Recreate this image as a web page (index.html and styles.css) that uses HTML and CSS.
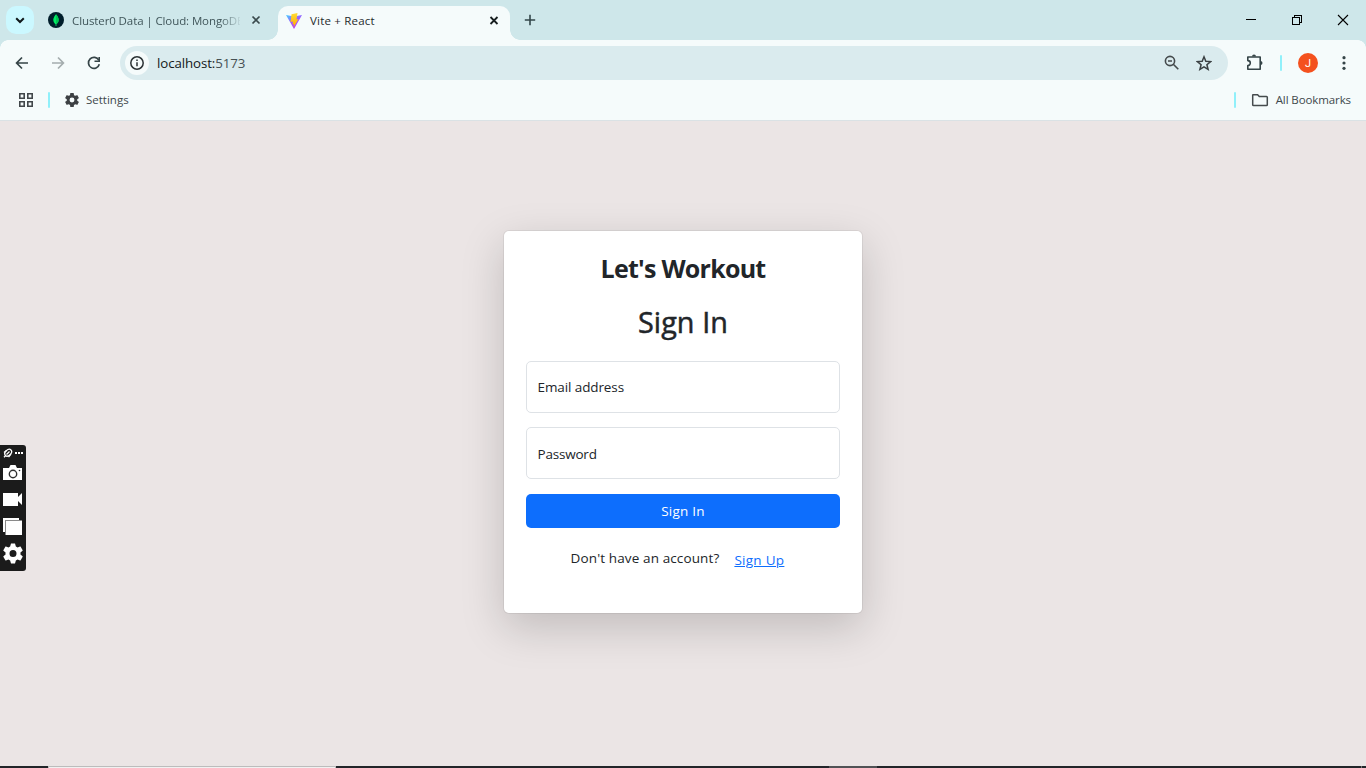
FILE: index.html
```html
<!DOCTYPE html>
<html lang="en">
<head>
<meta charset="utf-8">
<title>Vite + React</title>
<link rel="stylesheet" href="styles.css">
</head>
<body>
<div class="browser">
  <div class="tabstrip">
    <div class="tab-search"><svg width="28" height="28" viewBox="0 0 28 28"><path d="M10.2 12.2L14 16l3.8-3.8" fill="none" stroke="#10191b" stroke-width="2"/></svg></div>
    <div class="tab tab-idle">
      <svg width="16" height="16" viewBox="0 0 16 16"><circle cx="8" cy="8" r="8" fill="#001e2b"/><path d="M8 2.200C5.500 5 4.900 7.500 5.500 9.300c.4 1.500 1.300 2.300 2.100 3V14h.8v-1.700c.8-.7 1.700-1.500 2.100-3C11.100 7.500 10.500 5 8 2.200z" fill="#00ed64"/><path d="M8 2.200V12.300c.8-.7 2-1.500 2.500-3C11.100 7.500 10.500 5 8 2.200z" fill="#00c653"/></svg>
      <span class="tab-title fade">Cluster0 Data | Cloud: MongoDB</span>
      <svg width="16" height="16" viewBox="0 0 16 16"><path d="M4.500 4.500l7 7M11.500 4.500l-7 7" stroke="#3a4a4d" stroke-width="1.700"/></svg>
    </div>
    <div class="tab tab-active">
      <svg width="16" height="16" viewBox="0 0 32 32"><defs><linearGradient id="va" x1="0" y1="0" x2=".6" y2="1"><stop offset="0" stop-color="#41d1ff"/><stop offset=".5" stop-color="#9a60ff"/><stop offset="1" stop-color="#bd34fe"/></linearGradient><linearGradient id="vb" x1="0" y1="0" x2="0" y2="1"><stop offset="0" stop-color="#ffdd35"/><stop offset="1" stop-color="#ffa800"/></linearGradient></defs><path d="M0 4L16 7 32 4 16 32z" fill="url(#va)"/><path d="M23 0L11 2.500 9 18l5-1-1 6 3-1-1 7 10-17-4 1z" fill="url(#vb)"/></svg>
      <span class="tab-title t-vite">Vite + React</span>
      <svg width="16" height="16" viewBox="0 0 16 16"><path d="M4.500 4l7 7M11.500 4l-7 7" stroke="#171f20" stroke-width="1.800"/></svg>
    </div>
    <svg class="new-tab" width="16" height="16" viewBox="0 0 16 16"><path d="M8 2.800v10.400M2.800 8h10.400" stroke="#33474a" stroke-width="1.600"/></svg>
    <div class="window-controls">
      <svg width="46" height="40" viewBox="0 0 46 40" shape-rendering="crispEdges"><path d="M18 19.500h10" stroke="#000"/></svg>
      <svg width="46" height="40" viewBox="0 0 46 40" shape-rendering="crispEdges"><path d="M18.500 17.500h7v7h-7zM20.500 17V15.500h7v7H26" fill="none" stroke="#000"/></svg>
      <svg width="46" height="40" viewBox="0 0 46 40"><path d="M18 15l10 10M28 15L18 25" stroke="#000" stroke-width="1.100"/></svg>
    </div>
  </div>
  <div class="toolbar">
    <svg width="20" height="20" viewBox="0 0 20 20"><path d="M16 10H5M10 4.500L4.600 10l5.400 5.500" fill="none" stroke="#354447" stroke-width="1.700"/></svg>
    <svg width="20" height="20" viewBox="0 0 20 20"><path d="M4 10h11M10 4.500l5.400 5.500-5.400 5.500" fill="none" stroke="#a4adae" stroke-width="1.700"/></svg>
    <svg width="20" height="20" viewBox="0 0 20 20"><path d="M14.800 7.200A5.500 5.500 0 1 0 15.300 11.300" fill="none" stroke="#354447" stroke-width="1.700"/><path d="M15.200 4v4.300h-4.700" fill="none" stroke="#354447" stroke-width="1.600"/></svg>
    <div class="omnibox">
      <div class="site-info"><svg width="16" height="16" viewBox="0 0 16 16"><circle cx="8" cy="8" r="6.200" fill="none" stroke="#2a3133" stroke-width="1.500"/><path d="M8 7.200v4M8 4.500v1.500" stroke="#2a3133" stroke-width="1.500"/></svg></div>
      <span class="url">localhost:<span class="port">5173</span></span>
      <svg width="16" height="16" viewBox="0 0 16 16"><circle cx="6" cy="6" r="4.600" fill="none" stroke="#454b4d" stroke-width="1.600"/><path d="M9.300 9.300l5 5M4 6h4" stroke="#454b4d" stroke-width="1.600"/></svg>
      <svg width="16" height="16" viewBox="0 0 16 16"><path d="M8 1.800l1.800 4.400 4.800.4-3.700 3.100 1.200 4.700L8 11.900l-4.100 2.500 1.200-4.700L1.400 6.600l4.800-.4z" fill="none" stroke="#3b4143" stroke-width="1.500"/></svg>
    </div>
    <svg width="20" height="20" viewBox="0 0 20 20"><path d="M3.800 4H16.200V16.200H3.800V12.600a2.400 2.400 0 0 0 0-5z" fill="none" stroke="#354447" stroke-width="1.600" stroke-linejoin="round"/><path d="M8 3.500a2 2 0 0 1 4 0zM16.500 8.100a2 2 0 0 1 0 4z" fill="#354447"/></svg>
    <i class="divider"></i>
    <div class="avatar">J</div>
    <svg class="more" width="16" height="16" viewBox="0 0 16 16"><g fill="#354447"><circle cx="8" cy="2.700" r="1.600"/><circle cx="8" cy="8" r="1.600"/><circle cx="8" cy="13.300" r="1.600"/></g></svg>
  </div>
  <div class="bookmarks">
    <svg width="16" height="16" viewBox="0 0 16 16"><path d="M1.800 1.800h4.400v4.400H1.800zM9.800 1.800h4.400v4.400H9.800zM1.800 9.800h4.400v4.400H1.800zM9.800 9.800h4.400v4.400H9.800z" fill="none" stroke="#41474a" stroke-width="1.600"/></svg>
    <i class="divider"></i>
    <svg width="14" height="14" viewBox="2 2 20 20"><path d="M19.430 12.980c.04-.32.07-.64.07-.98s-.03-.66-.07-.98l2.110-1.650c.19-.15.24-.42.12-.64l-2-3.460c-.12-.22-.39-.3-.61-.22l-2.490 1c-.52-.4-1.080-.73-1.690-.98l-.38-2.650A.488.488 0 0 0 14 2h-4c-.25 0-.46.18-.49.42l-.38 2.650c-.61.25-1.170.59-1.690.98l-2.490-1c-.23-.09-.49 0-.61.22l-2 3.460c-.13.22-.07.49.12.64l2.110 1.650c-.04.32-.07.65-.07.98s.03.66.07.98l-2.110 1.650c-.19.15-.24.42-.12.64l2 3.460c.12.22.39.3.61.22l2.490-1c.52.4 1.080.73 1.690.98l.38 2.650c.03.24.24.42.49.42h4c.25 0 .46-.18.49-.42l.38-2.650c.61-.25 1.170-.59 1.690-.98l2.490 1c.23.09.49 0 .61-.22l2-3.460c.12-.22.07-.49-.12-.64zM12 15.500A3.500 3.500 0 1 1 12 8.500a3.500 3.500 0 0 1 0 7z" fill="#3c4043"/></svg>
    <span class="t-settings">Settings</span>
    <i class="divider push"></i>
    <svg width="18" height="16" viewBox="0 0 18 16"><path d="M2 2.700h4.600l1.700 1.800h7.200q.8 0 .8.800v7.400q0 .8-.8.800H2.500q-.8 0-.8-.8V3z" fill="none" stroke="#454b4d" stroke-width="1.500"/></svg>
    <span class="t-all">All Bookmarks</span>
  </div>
</div>

<main class="page">
  <section class="card">
    <h1 class="brand">Let's Workout</h1>
    <h2 class="heading">Sign In</h2>
    <div class="field"><span>Email address</span></div>
    <div class="field field-password"><span>Password</span></div>
    <div class="submit">Sign In</div>
    <div class="signup"><span>Don't have an account?</span><a class="signup-link">Sign Up</a></div>
  </section>
</main>

<aside class="recorder">
  <svg width="26" height="126" viewBox="0 0 26 126">
    <ellipse cx="8.200" cy="7.700" rx="3.900" ry="2.700" transform="rotate(-45 8.200 7.700)" fill="none" stroke="#fff" stroke-width="1.300"/>
    <path d="M6.500 9.500L9.500 6.500M4 12.200l1.500-1.500M6.500 5.500L4 7.500M11 9L8.500 12" fill="none" stroke="#fff" stroke-width="1.300"/>
    <g fill="#fff"><rect x="15" y="7" width="2" height="2"/><rect x="18" y="7" width="2" height="2"/><rect x="21" y="7" width="2" height="2"/>
    <path d="M3 23h6l1.500-3h5l1.500 3h5v12H3z"/><path d="M3 48h15v4l4-4v12l-4-4v5H3z"/></g>
    <circle cx="13" cy="29" r="3.700" fill="#fff" stroke="#303030" stroke-width="1.400"/><circle cx="19.500" cy="25.500" r=".8" fill="#222"/>
    <path d="M3 73h16v14H3z" fill="#fff"/><path d="M5 75h17v15H5z" fill="#8a8a8a"/><path d="M6 76h16v14H6z" fill="#fff"/>
    <path transform="translate(1 96.500)" d="M19.430 12.980c.04-.32.07-.64.07-.98s-.03-.66-.07-.98l2.110-1.650c.19-.15.24-.42.12-.64l-2-3.460c-.12-.22-.39-.3-.61-.22l-2.490 1c-.52-.4-1.080-.73-1.690-.98L14 2h-4l-.87 3.070c-.61.25-1.170.59-1.690.98l-2.490-1c-.23-.09-.49 0-.61.22l-2 3.460c-.13.22-.07.49.12.64l2.110 1.650a7 7 0 0 0 0 1.960l-2.110 1.650c-.19.15-.24.42-.12.64l2 3.460c.12.22.39.3.61.22l2.490-1c.52.4 1.080.73 1.690.98L10 22h4l.87-3.070c.61-.25 1.170-.59 1.690-.98l2.490 1c.23.09.49 0 .61-.22l2-3.460c.12-.22.07-.49-.12-.64zM12 15.500A3.500 3.500 0 1 1 12 8.500a3.500 3.500 0 0 1 0 7z" fill="#fff"/>
  </svg>
</aside>
<footer class="taskbar"><i class="task-search"></i><i class="task-active"></i><i class="task-edge"></i></footer>
</body>
</html>
```

FILE: styles.css
```css
* { box-sizing: border-box; }
body {
  margin: 0; width: 1366px; height: 768px; overflow: hidden;
  display: flex; flex-direction: column;
  background: #ebe5e5; color: #212529;
  font-family: "Open Sans", "Noto Sans", sans-serif;
}
svg { display: block; flex: none; }
span, a { white-space: nowrap; }
.browser { height: 121px; flex: none; font-size: 11.500px; background: #f5fbfb; border-bottom: 1px solid #dae2e5; }
.tabstrip { height: 40px; display: flex; align-items: center; background: #cee7ea; }
.tab-search { width: 28px; height: 28px; margin-left: 6px; border-radius: 10px; background: #cbf8ff; }
.tab { display: flex; align-items: center; }
.tab-title { flex: 1; margin-left: 8px; line-height: 18px; }
.tab-idle { width: 216px; margin-left: 14px; color: #40565a; }
.tab-idle .tab-title { flex: none; width: 168px; margin: 1px 8px 0 8px; letter-spacing: -.1px; }
.fade { -webkit-mask-image: linear-gradient(90deg, #000 148px, transparent 170px); mask-image: linear-gradient(90deg, #000 148px, transparent 170px); }
.t-vite { letter-spacing: .2px; }
.tab-active {
  width: 232px; height: 34px; margin-left: 14px; padding: 0 8px 5px 8px;
  align-self: flex-end; position: relative; color: #1f2b2d;
  background: #f5fbfb; border-radius: 10px 10px 0 0;
}
.tab-active::before, .tab-active::after { content: ""; position: absolute; bottom: 0; width: 10px; height: 10px; }
.tab-active::before { left: -10px; background: radial-gradient(circle at 0 0, #cee7ea 9.500px, #f5fbfb 10px); }
.tab-active::after { right: -10px; background: radial-gradient(circle at 100% 0, #cee7ea 9.500px, #f5fbfb 10px); }
.new-tab { margin-left: 12px; }
.window-controls { display: flex; margin-left: auto; }
.toolbar { height: 46px; display: flex; align-items: center; padding-left: 12px; gap: 16px; position: relative; }
.toolbar::before, .toolbar::after { content: ""; position: absolute; top: 0; width: 8px; height: 8px; }
.toolbar::before { left: 0; background: radial-gradient(circle at 100% 100%, transparent 7.500px, #cee7ea 8px); }
.toolbar::after { right: 0; background: radial-gradient(circle at 0 100%, transparent 7.500px, #cee7ea 8px); }
.omnibox { width: 1108px; height: 34px; display: flex; align-items: center; padding: 0 16px 0 5px; border-radius: 17px; background: #daebee; }
.site-info { width: 24px; height: 24px; display: grid; place-items: center; border-radius: 50%; background: #f5fbfb; }
.url { flex: 1; margin-left: 8px; font-size: 13.300px; letter-spacing: -.1px; color: #14191a; }
.port { color: #465053; }
.omnibox svg + svg { margin-left: 16px; }
.divider { width: 2px; height: 16px; flex: none; border-radius: 1px; background: #90f0fa; }
.avatar { width: 20px; height: 20px; border-radius: 50%; background: #f4511e; color: #fff; font: 11px/21px Roboto, sans-serif; text-align: center; }
.more { margin-left: 2px; }
.bookmarks { height: 28px; display: flex; align-items: center; padding: 0 15px 0 18px; color: #3e484b; }
.bookmarks .divider { margin: 0 15px 0 14px; }
.bookmarks .divider.push { margin-left: auto; }
.bookmarks span { margin-left: 7px; margin-top: -2px; }
.t-all { letter-spacing: -.1px; }

.page { flex: 1; display: flex; justify-content: center; align-items: flex-start; padding-top: 109px; }
.card {
  width: 360px; height: 384px; padding: 22px; display: flex; flex-direction: column;
  font-size: 13.500px; background: #fff; background-clip: padding-box;
  border: 1px solid rgba(0,0,0,.06); border-radius: 6px; box-shadow: 0 14px 43px rgba(0,0,0,.175);
}
.brand { margin: -1px 0 0; font-size: 25px; line-height: 32px; font-weight: 700; letter-spacing: -.75px; text-align: center; }
.heading { margin: 20px 0 0; font-size: 28.800px; line-height: 36px; font-weight: 500; -webkit-text-stroke: .5px #212529; letter-spacing: .1px; text-align: center; }
.field { height: 52px; flex: none; margin-bottom: 14px; padding-left: 10.500px; display: flex; align-items: center; border: 1px solid #dee2e6; border-radius: 5px; letter-spacing: -.1px; }
.field-password { padding-top: 1px; letter-spacing: -.2px; }
.heading + .field { margin-top: 21px; }
.submit { height: 34px; flex: none; margin-top: 1px; line-height: 34px; letter-spacing: .25px; color: #fff; text-align: center; background: #0d6efd; border-radius: 5px; }
.signup { display: flex; justify-content: center; margin: 20px 11px 0 0; line-height: 20px; letter-spacing: .12px; }
.signup-link { margin: 2px 0 0 15px; color: #0d6efd; letter-spacing: .28px; text-decoration: underline; }

.recorder { position: absolute; left: 0; top: 445px; width: 26px; height: 126px; background: #1b1b1b; border-radius: 0 3px 3px 0; }
.taskbar { height: 2px; flex: none; display: flex; background: #222529; }
.task-search { width: 288px; margin-left: 48px; background: #f1f1f1; border: 1px solid #bcbcbc; border-bottom: 0; }
.task-active { width: 48px; margin-left: 493px; background: #515255; }
.task-edge { width: 1px; margin-left: 484px; background: #777; }
```
